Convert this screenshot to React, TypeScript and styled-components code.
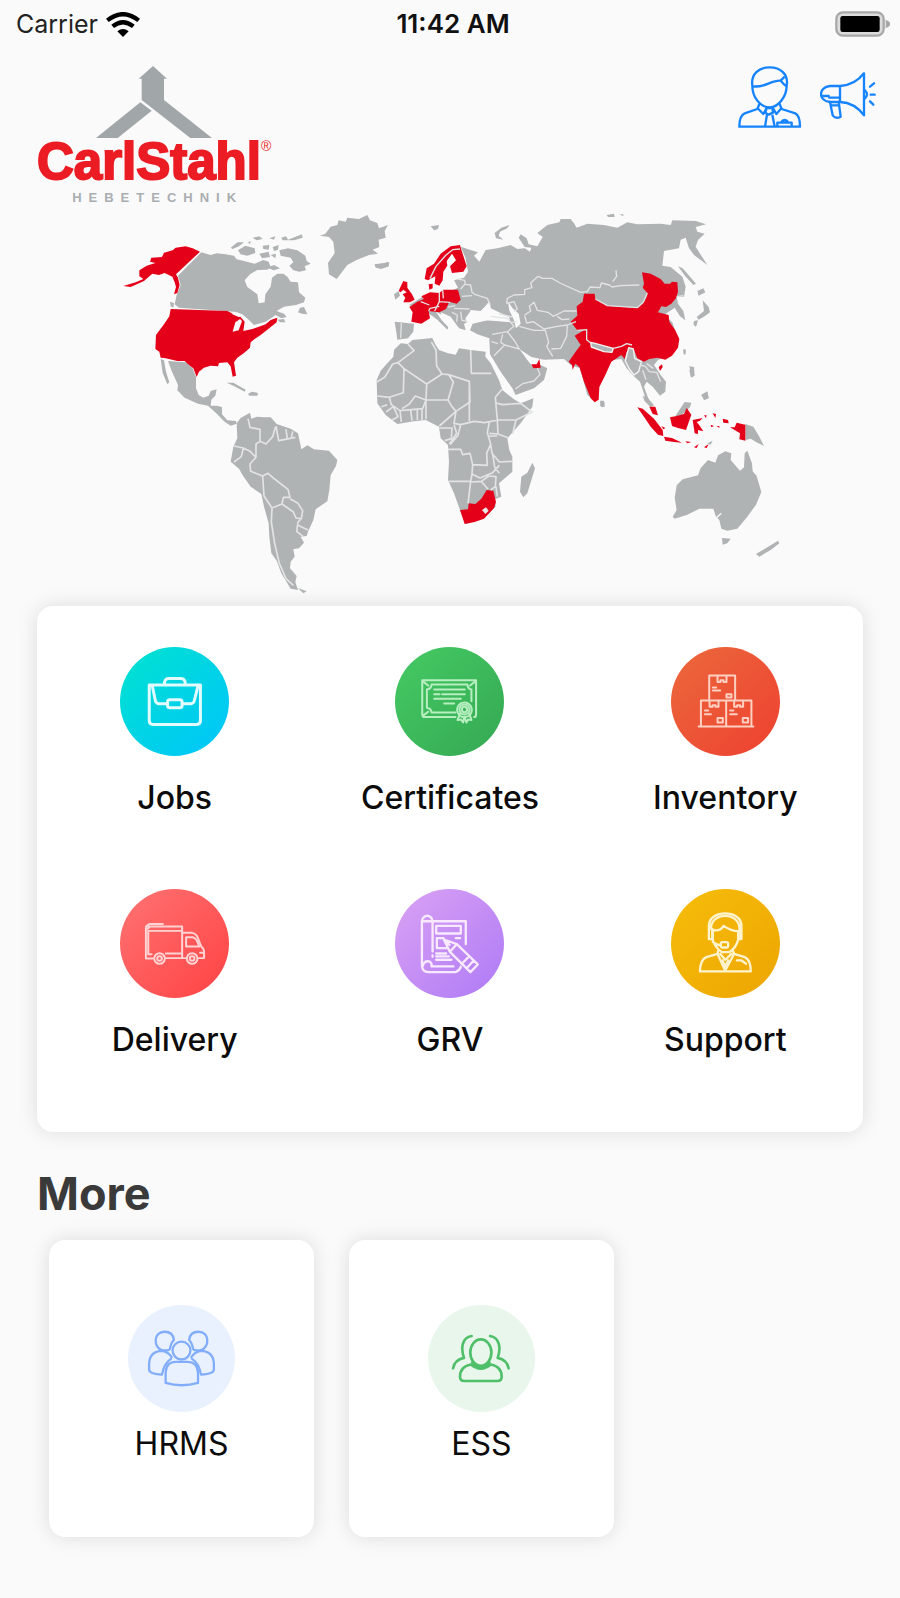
import React from "react";
import styled, { createGlobalStyle } from "styled-components";

const GlobalStyle = createGlobalStyle`
  *, *::before, *::after { box-sizing: border-box; }
  body {
    margin: 0;
    background: #fafafa;
    color: #111;
    font-family: Inter, "Liberation Sans", sans-serif;
  }
`;

const Screen = styled.div`
  display: flex;
  flex-direction: column;
  min-height: 100vh;
  background: #fafafa;
`;

const StatusBar = styled.div`
  display: grid;
  grid-template-columns: 1fr auto 1fr;
  align-items: center;
  height: 48px;
  padding: 0 10px 0 16px;
  font-size: 26px;
  line-height: 32px;
`;

const Carrier = styled.div`
  display: flex;
  align-items: center;
  gap: 8px;
  color: #222;
  font-size: 25px;
`;

const Time = styled.div`
  font-weight: 600;
  color: #111;
`;

const BatterySlot = styled.div`
  display: flex;
  justify-content: flex-end;
`;

const Header = styled.header`
  display: flex;
  justify-content: space-between;
  align-items: flex-start;
  padding: 18px 24px 0 37px;
`;

const Brand = styled.div`
  display: flex;
  flex-direction: column;
  align-items: center;
  font-family: "Liberation Sans", Arial, sans-serif;
`;

const WordmarkRow = styled.div`
  display: flex;
  align-items: flex-start;
  color: #ec1c24;
`;

const Wordmark = styled.span`
  font-size: 51px;
  font-weight: 700;
  line-height: 48px;
  -webkit-text-stroke: 2px #ec1c24;
`;

const Registered = styled.span`
  font-size: 14px;
  line-height: 16px;
`;

const Tagline = styled.span`
  padding: 4px 0 0 7px;
  font-size: 13px;
  font-weight: 700;
  line-height: 16px;
  letter-spacing: 7px;
  color: #a9aeb1;
`;

const HeaderActions = styled.div`
  display: flex;
  align-items: center;
  gap: 18px;
`;

const IconButton = styled.button`
  display: flex;
  padding: 0;
  border: 0;
  background: none;
  cursor: pointer;
`;

const MapSection = styled.section`
  display: flex;
  justify-content: center;
  padding-bottom: 11px;

  svg {
    display: block;
    width: 75%;
    height: auto;
  }
`;

const MenuCard = styled.nav`
  display: grid;
  grid-template-columns: repeat(3, 1fr);
  row-gap: 71px;
  margin: 0 37px;
  padding: 41px 0 72px;
  border-radius: 16px;
  background: #fff;
  box-shadow: 0 0 20px rgba(0, 0, 0, 0.12);
`;

const MenuItem = styled.button`
  display: flex;
  flex-direction: column;
  align-items: center;
  gap: 22px;
  padding: 0;
  border: 0;
  background: none;
  color: #0c0c0c;
  font: 500 32px/40px Inter, "Liberation Sans", sans-serif;
  cursor: pointer;
`;

const Badge = styled.span<{ $from: string; $to: string }>`
  display: flex;
  width: 109px;
  height: 109px;
  border-radius: 50%;
  background: linear-gradient(135deg, ${(p) => p.$from}, ${(p) => p.$to});
`;

const MoreTitle = styled.h2`
  margin: 35px 37px 19px;
  color: #3a3a3a;
  font-size: 45px;
  font-weight: 700;
  line-height: 54px;
`;

const MoreList = styled.nav`
  display: flex;
  gap: 35px;
  padding: 0 49px 60px;
`;

const MoreCard = styled.button`
  display: flex;
  flex-direction: column;
  align-items: center;
  flex: 0 1 265px;
  gap: 12px;
  padding: 65px 0 73px;
  border: 0;
  border-radius: 16px;
  background: #fff;
  box-shadow: 0 0 20px rgba(0, 0, 0, 0.12);
  color: #0c0c0c;
  font: 400 32px/40px Inter, "Liberation Sans", sans-serif;
  cursor: pointer;
`;

const SoftBadge = styled.span<{ $tint: string }>`
  display: flex;
  width: 107px;
  height: 107px;
  border-radius: 50%;
  background: ${(p) => p.$tint};
`;

const Glyph = styled.svg`
  display: block;
  width: 100%;
  height: 100%;
  fill: none;
  stroke-linecap: round;
  stroke-linejoin: round;
`;

const LAND = "#b0b3b4";
const RED = "#e50019";
const SEA = "#fafafa";

const Wifi = () => (
  <svg width="34" height="25" viewBox="0 0 102 75" fill="none" stroke="#000" strokeWidth="13" aria-label="Wi-Fi">
    <path d="M4 25Q51 -12 98 25" />
    <path d="M20 43Q51 18 82 43" />
    <path d="M34 58Q51 44 68 58L51 75Z" fill="#000" stroke="none" />
  </svg>
);

const Battery = () => (
  <svg width="55" height="26" viewBox="0 0 165 78" aria-label="Battery full">
    <rect x="4" y="4" width="142" height="70" rx="20" fill="#dcdcdc" stroke="#a8a8a8" strokeWidth="7" />
    <rect x="16" y="15" width="118" height="48" rx="7" fill="#000" />
    <path d="M152 26Q166 32 166 39T152 52Z" fill="#a8a8a8" />
  </svg>
);

const LogoMark = () => (
  <svg width="116" height="72" viewBox="287 198 348 216" fill="#a1a6a9" aria-hidden="true">
    <path d="M458 198L500 236H491V300L635 414H570L424 300V236H415Z" />
    <path d="M420 307L454 332L352 414H287Z" />
  </svg>
);

const ProfileIcon = () => (
  <svg width="64" height="64" viewBox="112 196 192 192" fill="none" stroke="#1683ff" strokeWidth="7" strokeLinejoin="round">
    <path d="M155 255C150 220 175 200 207 200S264 220 258 255C258 285 235 320 207 320S155 290 155 255Z" />
    <path d="M157 257C195 262 210 238 240 240Q247 250 258 257M240 240L252 228" />
    <path d="M177 308L170 325L132 338Q116 345 116 378H298Q298 345 284 338L243 325L236 308" />
    <path d="M170 322L188 340L198 322H217L227 340L243 322M198 322L194 336L204 342L217 336L215 322M199 342L193 378M215 342L222 378" />
    <path d="M230 378V366H240Q252 350 264 366H273V378M240 366H264" />
  </svg>
);

const MegaphoneIcon = () => (
  <svg width="56" height="56" viewBox="358 212 168 168" fill="none" stroke="#1683ff" strokeWidth="7" strokeLinejoin="round" strokeLinecap="round">
    <path d="M418 260H388C352 264 352 305 388 308H418ZM418 260Q462 258 490 222V348Q462 310 418 308" />
    <path d="M386 295H414M364 290H384M388 308L396 348Q405 360 420 352L414 308M394 318H414" />
    <path d="M492 272Q506 285 492 298M508 262L520 252M510 286H522M508 306L518 316" />
  </svg>
);

const JobsIcon = () => (
  <Glyph viewBox="61 52 328 328" stroke="#e2fbff" strokeWidth="9">
    <path d="M149 166H303V274Q303 285 292 285H160Q149 285 149 274Z" />
    <path d="M195 164V157Q198 147 208 147H243Q254 147 257 157V164" />
    <path d="M158 168L168 216Q172 223 180 223H204M296 168L284 216Q280 223 272 223H248" />
    <rect x="204" y="211" width="44" height="24" rx="7" />
  </Glyph>
);

const CertificateIcon = () => (
  <Glyph viewBox="888 52 328 328" stroke="#b7efc1" strokeWidth="6">
    <path d="M1070 263H978Q970 263 970 255V152H1132V255Q1132 263 1126 263" />
    <path d="M998 165H1106Q1107 178 1118 180V215M1070 249H998Q997 237 984 235V180Q997 178 998 165" />
    <path d="M974 157L988 168M1128 157L1114 168M974 257L988 247" />
    <path d="M1006 180H1098M1006 194H1022M1030 194H1098M1006 208H1086M1036 222H1066" />
    <path d="M1084 252L1076 272L1087 270L1093 279L1097 262L1103 279L1108 270L1118 272L1112 252" />
    <circle cx="1097" cy="241" r="22" strokeDasharray="9 3" />
    <circle cx="1097" cy="240" r="15" />
    <circle cx="1097" cy="240" r="8" />
  </Glyph>
);

const InventoryIcon = () => (
  <Glyph viewBox="64 52 328 328" stroke="#ffd0c2" strokeWidth="6">
    <path d="M147 291H312M179 213V138H257V213M154 290V213H306V290M230 213V290" />
    <path d="M204 139V157H213V152H222V157H231V139M180 214V232H189V227H198V232H207V214M254 214V232H263V227H272V232H281V214" />
    <path d="M190 174H200M190 183H212M166 243H176M166 254H184M242 243H252M242 254H262" />
    <rect x="231" y="194" width="15" height="10" />
    <rect x="204" y="266" width="16" height="13" />
    <rect x="280" y="266" width="16" height="13" />
  </Glyph>
);

const DeliveryIcon = () => (
  <Glyph viewBox="61 58 328 328" stroke="#ffd3d3" strokeWidth="6">
    <path d="M160 267H139V171L150 163H190M146 171H248V266H199M139 181L150 172M146 184H244M146 184V252" />
    <path d="M248 190H278Q291 192 296 207L306 232Q314 236 314 250V266H298M258 266H248M199 252H248" />
    <path d="M260 203H280Q289 205 292 213L300 231H260ZM302 250H312M146 254H156" />
    <circle cx="180" cy="267" r="16" />
    <circle cx="180" cy="267" r="7" />
    <circle cx="278" cy="267" r="16" />
    <circle cx="278" cy="267" r="7" />
  </Glyph>
);

const GrvIcon = () => (
  <Glyph viewBox="888 58 328 328" stroke="#f8e9ff" strokeWidth="7">
    <path d="M1001 246V155Q999 140 985 138Q971 140 969 155V288Q970 308 988 308H1070Q1082 304 1086 292" />
    <path d="M1001 155H1101V224M969 155H1001M971 290Q977 272 990 276Q1000 280 998 291H1064M1001 258V262" />
    <rect x="1012" y="169" width="74" height="23" />
    <path d="M1046 236H1014V206H1034M1071 206H1084M1012 252H1042M1012 261H1050M1012 271H1058" />
    <path d="M1035 210L1074 224L1137 285L1115 308L1053 247ZM1053 247L1074 224M1110 262L1088 284M1124 274L1103 297M1035 210L1052 226" />
  </Glyph>
);

const SupportIcon = () => (
  <Glyph viewBox="64 777 328 328" stroke="#fff3cd" strokeWidth="7">
    <path d="M184 897C184 845 270 845 270 897V928H276V888C276 838 178 838 178 888V928H188V897" />
    <path d="M190 900Q212 906 222 888Q246 904 266 904M190 905V932Q196 952 217 967H240Q260 953 266 930V904M190 936Q200 946 212 946" />
    <rect x="214" y="937" width="22" height="16" rx="5" />
    <path d="M206 963L204 972L170 982Q152 990 151 1025H304Q304 990 286 982L254 972L250 963" />
    <path d="M204 972L227 1023L254 972M212 972L227 990L246 972M219 992L227 1010L236 992M262 992H276L290 1002" />
  </Glyph>
);

const HrmsIcon = () => (
  <Glyph viewBox="0 0 324 324" stroke="#82adfa" strokeWidth="7">
    <path d="M99 135C78 126 76 81 111 81Q136 81 139 106Q130 114 127 133M99 135Q112 140 124 136" />
    <path d="M225 135C246 126 248 81 213 81Q188 81 185 106Q194 114 197 133M225 135Q212 140 200 136" />
    <path d="M103 211Q64 208 64 196V177Q66 140 104 139Q122 142 132 158M103 211Q108 178 130 163" />
    <path d="M221 211Q260 208 260 196V177Q258 140 220 139Q202 142 192 158M221 211Q216 178 194 163" />
    <circle cx="162" cy="138" r="27" />
    <path d="M114 236V204Q116 172 145 172H179Q210 172 212 204V236Q162 250 114 236Z" />
  </Glyph>
);

const EssIcon = () => (
  <Glyph viewBox="0 0 324 324" stroke="#4fbf6a" strokeWidth="8">
    <ellipse cx="160" cy="144" rx="32" ry="40" />
    <path d="M132 94C104 98 98 130 109 160Q80 166 76 192M188 94C216 98 222 130 211 160Q240 166 244 192" />
    <path d="M130 180Q97 186 97 217Q97 230 110 230H210Q223 230 223 217Q223 186 190 180Q160 205 130 180Z" />
    <path d="M134 174Q160 200 186 174" />
  </Glyph>
);

const WorldMap = () => (
  <svg viewBox="337 618 2025 1167" role="img" aria-label="World map with active countries in red" strokeLinejoin="round">
    {/* North America and Greenland */}
    <g transform="translate(330 615)" fill={LAND}>
      <path d="M272 142L300 150L318 145L345 148L370 152L378 163L400 168L432 176L458 165L474 170L480 186L470 194L440 195L418 208L402 226L410 246L440 268L444 295L462 292L464 268L480 245L484 218L500 206L518 206L530 215L540 230L562 232L565 262L584 278L580 292L556 300L520 305L498 318L520 326L528 336L512 340L495 330L465 350L430 360L415 345L395 328L370 320L205 308L192 298L198 270L210 240L202 212Z" />
      <path d="M360 128L380 112L400 112L385 124L366 132ZM382 136L404 122L432 130L434 144L410 152L390 148ZM426 98L446 94L456 102L438 106ZM476 100L494 94L490 104ZM512 98L526 94L532 104L574 88L576 98L550 106L516 106ZM456 122L476 120L474 134L458 132ZM486 126L504 120L502 134L490 138ZM446 146L474 140L478 156L454 160ZM480 150L496 146L494 160ZM506 136L532 130L560 136L584 152L588 168L600 176L582 184L586 196L566 200L548 196L536 182L548 172L540 158L510 152ZM468 188L490 180L508 190L490 196ZM562 322L568 308L580 306L590 328L574 326ZM500 344L520 342L524 352L508 352ZM178 290L190 294L188 308L180 304ZM412 112L420 108L418 118Z" />
      <path d="M628 92L644 86L660 65L680 60L684 46L705 50L710 38L745 42L770 30L778 46L800 54L805 70L832 60L822 78L825 98L804 104L806 126L786 134L802 146L775 150L738 165L710 180L690 206L678 222L655 208L652 174L672 144L668 110L655 96Z" />
      <path d="M792 178L806 182L832 170L834 184L812 192L796 188Z" />
      <path d="M172 468L225 472L245 488L256 515L256 550L264 570L278 578L294 572L300 558L318 553L314 572L302 584L300 602L318 602L334 606L334 628L350 646L376 648L378 656L360 662L342 650L316 624L292 602L262 596L222 578L200 556L202 540L184 500Z" />
      <path d="M150 462L160 466L166 500L176 532L170 538L156 504ZM348 533L368 533L405 554L402 560L368 542ZM412 566L424 560L442 564L440 572L416 572Z" />
      <path fill={RED} d="M268 140L246 130L225 124L195 128L186 136L160 143L154 156L122 158L118 170L134 174L108 182L86 196L86 214L98 222L75 232L38 243L60 246L100 228L125 206L145 210L162 204L185 215L192 232L196 246L190 268L200 264L207 240L202 218L196 208Z" />
      <path fill={RED} d="M180 312L350 318L370 328L388 334L402 350L398 378L425 372L465 358L480 345L500 338L498 352L470 374L450 390L432 402L420 412L418 428L400 444L380 458L370 472L376 512L366 515L360 484L350 472L325 474L322 484L300 482L280 488L265 500L258 516L248 490L232 478L222 468L200 468L165 460L150 458L146 440L134 432L136 390L160 358L176 334Z" />
      <path fill={SEA} d="M366 380L374 352L388 342L394 348L384 376ZM362 326L380 322L400 334L384 336Z" />
    </g>

    {/* South America */}
    <g transform="translate(630 1170)">
      <path fill={LAND} d="M78 100L90 84L118 68L122 86L140 80L160 82L180 82L198 102L240 116L262 130L268 158L272 178L290 166L310 178L355 182L380 210L376 228L360 255L356 300L350 334L315 358L308 390L292 425L288 438L270 440L280 458L265 475L248 478L252 500L240 515L238 535L258 558L254 576L262 600L240 596L212 550L198 512L182 490L176 440L174 400L160 350L152 312L120 290L96 256L85 236L60 215L68 170L80 145ZM262 594L288 604L278 610Z" />
      <path fill="none" stroke="#e2e4e4" strokeWidth="5" d="M112 86L118 112L148 118L148 154L136 162V202L118 184L98 174L70 168M148 154L166 162L186 140L194 112M196 108L204 152L254 142M226 118L230 148M246 124L242 144M136 202L118 222L120 244L156 258L172 250L188 264L232 298L238 322L218 322L214 342L248 366L256 384L272 386L276 362L262 340L238 326M98 174L92 200L70 216M156 258L160 318L184 354L214 342M184 354L182 396L192 460L206 520L226 566L248 586M272 386L262 396L258 424L278 440M262 406L292 420" />
    </g>

    {/* Europe and Asia */}
    <g transform="translate(1110 615)">
      <path fill={LAND} d="M270 125L300 135L322 142L310 152L326 170L345 135L380 130L420 120L440 132L462 130L478 140L482 128L462 126L444 98L450 88L468 100L474 118L500 124L516 96L500 84L530 60L566 52L570 42L600 42L610 55L618 68L650 56L700 60L740 68L770 52L800 58L870 56L900 60L905 46L975 48L1006 58L975 66L980 80L1002 86L982 105L975 125L992 152L1010 180L970 150L955 130L945 98L930 104L925 130L880 138L875 182L900 186L935 215L945 245L940 275L918 275L922 296L938 318L944 346L928 334L912 308L880 330L905 352L920 400L910 440L862 465L850 480L870 510L886 530L884 560L868 572L846 545L828 530L820 545L838 594L828 590L808 530L788 512L768 490L752 462L722 466L704 504L684 546L675 590L650 570L628 490L600 480L580 462L520 464L482 456L446 432L470 465L490 490L510 480L530 490L520 525L490 550L435 570L425 550L390 500L358 448L356 400L320 388L298 376L306 356L350 346L420 352L415 336L360 310L358 290L330 318L300 315L292 338L295 350L280 356L285 376L265 370L240 335L210 322L215 340L236 360L230 374L200 344L170 322L115 300L165 270L240 258L262 248L250 226L280 218L292 200L285 160Z" />
      <path fill={LAND} d="M72 350L130 356L128 380L112 400L80 404L76 376ZM180 64L205 60L202 72L190 76ZM372 84L392 68L416 60L410 70L388 80L384 92L398 104L376 100ZM12 178L56 172L54 184L30 190L14 186ZM70 268L84 258L88 272L74 284ZM708 30L730 26L732 36L712 36ZM746 28L758 28L758 34ZM922 184L936 190L976 236L968 240L944 214ZM980 258L998 250L1004 262L984 272ZM996 286L1014 306L1018 322L1004 332L984 344L978 336L1000 318ZM970 348L982 346L976 366L968 358ZM938 432L946 434L944 450L938 446ZM956 484L970 486L972 512L962 518ZM992 570L1010 562L1014 580L1000 586ZM690 588L702 594L700 606L688 602Z" />
      <g fill={SEA}>
        <path d="M300 318L330 320L355 290L358 312L390 334L410 348L350 346L310 352L290 362L284 340ZM412 290L426 310L444 326L450 356L436 370L430 346L416 316ZM196 320L214 330L264 368L262 384L240 374L212 344Z" />
        <path d="M232 176L244 160L236 200L284 208L280 216L248 218L252 240L200 248L212 238L220 210Z" />
      </g>
      <g fill={RED}>
        <path d="M162 222L168 190L190 176L210 146L240 124L268 120L272 134L288 184L278 200L244 204L238 184L256 166L244 146L228 168L230 182L218 200L216 226L206 242L192 236L194 214L178 222L172 226ZM174 238L186 236L186 250L176 254Z" />
        <path d="M92 240L98 228L110 232L110 248L124 268L132 284L118 292L98 292L104 278L96 268L108 262L98 254L90 262L84 258Z" />
        <path d="M116 306L140 290L160 282L152 274L178 262L206 264L218 254L262 254L270 284L258 296L236 290L226 312L206 322L174 318L178 340L152 356L122 350L126 322Z" />
        <path d="M482 478L498 478L506 462L510 488L488 490Z" />
        <path d="M600 350L620 332L618 304L636 290L640 266L672 266L674 282L710 302L760 306L800 308L814 296L826 280L830 264L816 248L820 236L814 202L840 206L870 222L882 236L898 236L904 230L920 232L922 260L916 280L902 296L886 306L872 304L862 322L894 330L896 350L914 376L926 402L922 428L904 452L884 464L860 458L836 462L820 470L800 460L790 436L768 440L762 462L752 450L722 470L704 510L686 546L684 584L672 592L660 580L640 530L626 486L614 476L606 494L604 480L594 470L618 436L630 420L612 392L642 374L620 376Z" />
        <path d="M864 486L874 478L876 486L868 498Z" />
      </g>
      <path fill={LAND} stroke="#f4f4f4" strokeWidth="4" d="M660 412L676 416L728 430L724 442L700 440L662 426ZM774 428L788 432L792 460L812 470L804 500L790 510L776 492L764 468Z" />
      <g fill="none" stroke="#e2e4e4" strokeWidth="4">
        <path d="M178 220L196 184L226 150L246 134L268 132M206 262V290L192 318M206 290L238 292M216 254L218 280M174 318L178 310L206 304M150 290L176 300" />
        <path d="M262 222L282 226L284 238L300 240L304 262L312 268L350 280L358 300M270 252L284 236M274 274L304 272M250 310L296 312M244 322L260 330L258 350M270 320L274 346L292 350M232 306L254 302M92 354L90 400" />
        <path d="M408 296L410 280L430 270L462 268L462 254L484 248L480 234L502 214L516 220L544 220L568 234L630 262L650 260L658 246L688 248L692 234L716 240L724 246L748 242L806 240M408 296L430 290L440 312L430 320M736 196L738 214L726 230" />
        <path d="M462 330L480 318L476 304L490 292L500 316L532 322L548 334L580 318L618 318M462 332L468 354L488 350L520 372L560 364L590 360L616 350M446 364L490 376L524 376L534 412L528 424L546 454M560 334L574 344L596 342M590 362L588 394L570 430L542 432M360 334L410 340L430 364L410 380L364 388M384 326L424 336M420 352L440 350M410 380L432 408L446 432L402 420L390 412L396 388M402 420L370 452M362 410L382 416" />
        <path d="M674 282L710 302L800 308L818 292L830 264M620 376L648 374L648 404L660 414M728 430L752 424L768 416L784 420M918 275L938 272M500 490L508 508L490 528L456 536L434 552M808 480L824 484L836 500L858 502L870 530M828 476L848 490M816 496L826 524" />
      </g>
    </g>

    {/* Africa */}
    <g transform="translate(1080 930)">
      <path fill={LAND} d="M120 100L142 102L155 90L215 84L225 105L235 120L262 130L285 134L295 115L330 120L375 125L374 140L390 160L415 210L425 240L460 268L480 280L518 265L515 290L480 340L440 385L446 420L455 440L455 485L415 520L422 560L402 568L405 590L370 625L315 642L298 600L280 550L262 510L265 455L262 405L240 385L235 350L195 330L160 334L110 342L75 315L50 280L48 210L60 182L80 160L98 140L100 120ZM515 458L523 475L500 550L488 562L478 545L482 500L500 488Z" />
      <path fill={RED} d="M298 600L322 598L324 580L344 582L362 566L378 540L398 542L406 576L400 594L370 626L342 636L312 642Z" />
      <path fill="#e8e9e9" d="M364 600L376 592L384 602L374 612Z" />
      <g fill="none" stroke="#e2e4e4" strokeWidth="5">
        <path d="M142 102L160 122L112 158L130 176L128 248L86 262L50 258M112 158L96 162L72 202L48 216M130 176L198 222L244 192L228 168L226 120L212 96M244 192L264 194L326 214V334M330 120L332 190L392 190M198 222L196 270L164 258L146 282L124 296M86 262L92 284L118 302L186 296L196 270L262 270L278 216L264 194M262 270L274 290L286 304L328 276L326 214M424 238L404 262L410 330M404 278L424 284L480 280L514 306L466 330L412 330L372 338L340 334L300 344L280 340L286 304L236 348M196 272V328M118 302L122 336M150 300L154 332M170 300V330M184 298V330M62 290L80 284M76 306L98 290L112 320L94 330" />
        <path d="M236 354H274L272 386L252 392M300 344L292 376L268 404M280 344L288 370L266 402M262 418L300 418L306 434L328 430L336 464L380 466L378 430L390 402L380 368L386 336M410 330L412 372L386 370M412 372L444 384M466 330L456 372M390 402L394 430L416 456L454 454M396 432L402 472L416 490M336 464L334 492L358 504L396 488L416 466M334 492L330 514H264M330 514L322 580M330 516L362 514L382 538M362 514L384 498L406 500L404 530L390 540M406 530L410 560M382 378H410" />
      </g>
    </g>

    {/* South-east Asia and Australia */}
    <g transform="translate(1710 1110)">
      <path fill={LAND} d="M318 346L336 328L382 316L390 294L412 270L434 278L442 256L464 244L482 250L480 270L508 302L520 292L522 250L530 242L544 280L546 304L558 318L572 366L556 404L530 440L500 476L470 482L452 476L446 450L436 440L428 416L386 416L350 434L312 446L306 440L318 420L312 384ZM454 504L480 506L470 520L456 524ZM556 552L600 526L622 512L626 520L600 540L566 560ZM524 162L548 170L566 200L580 228L556 216L540 206L524 210ZM314 138L342 96L362 98L358 112L330 138ZM216 78L230 82L250 106L240 112L222 94ZM88 92L100 92L102 110L92 112ZM392 74L410 64L414 84L402 88ZM356 0H368L366 20L360 20ZM410 220L426 212L420 224Z" />
      <path fill={RED} d="M200 112L216 116L250 146L276 180L278 198L262 194L240 170L224 146ZM236 110L254 110L262 136L246 132ZM280 200L304 204L334 218L310 216L284 212ZM298 142L318 138L340 132L348 114L362 134L346 180L322 174L304 168ZM366 150L396 144L388 152L378 156L386 166L398 184L382 180L382 192L372 190ZM426 130L436 132L434 144ZM456 146L472 150L474 160L458 158ZM478 172L492 172L498 158L524 164V212L506 208L508 190ZM370 232L384 222L378 234ZM400 232L414 222L408 234ZM400 136L408 136L406 144ZM420 164L430 168L422 172ZM438 168L446 168L446 174ZM272 168L284 174L278 178ZM344 214L362 216L350 220Z" />
      <path stroke={SEA} strokeWidth="4" fill="none" d="M434 446L452 430" />
    </g>
  </svg>
);

const menu = [
  { label: "Jobs", from: "#00e3cf", to: "#00c4fb", Icon: JobsIcon },
  { label: "Certificates", from: "#45ca63", to: "#35a853", Icon: CertificateIcon },
  { label: "Inventory", from: "#eb693c", to: "#ee4030", Icon: InventoryIcon },
  { label: "Delivery", from: "#ff7373", to: "#ff4243", Icon: DeliveryIcon },
  { label: "GRV", from: "#daa2f3", to: "#ae7af6", Icon: GrvIcon },
  { label: "Support", from: "#f6bd0b", to: "#eda500", Icon: SupportIcon },
];

const more = [
  { label: "HRMS", tint: "#eaf1fe", Icon: HrmsIcon },
  { label: "ESS", tint: "#e9f6ec", Icon: EssIcon },
];

export default function App() {
  return (
    <Screen>
      <GlobalStyle />
      <StatusBar>
        <Carrier>
          Carrier
          <Wifi />
        </Carrier>
        <Time>11:42 AM</Time>
        <BatterySlot>
          <Battery />
        </BatterySlot>
      </StatusBar>
      <Header>
        <Brand>
          <LogoMark />
          <WordmarkRow>
            <Wordmark>CarlStahl</Wordmark>
            <Registered>®</Registered>
          </WordmarkRow>
          <Tagline>HEBETECHNIK</Tagline>
        </Brand>
        <HeaderActions>
          <IconButton type="button" aria-label="Profile">
            <ProfileIcon />
          </IconButton>
          <IconButton type="button" aria-label="Announcements">
            <MegaphoneIcon />
          </IconButton>
        </HeaderActions>
      </Header>
      <main>
        <MapSection>
          <WorldMap />
        </MapSection>
        <MenuCard aria-label="Main menu">
          {menu.map(({ label, from, to, Icon }) => (
            <MenuItem key={label} type="button">
              <Badge $from={from} $to={to}>
                <Icon />
              </Badge>
              {label}
            </MenuItem>
          ))}
        </MenuCard>
        <MoreTitle>More</MoreTitle>
        <MoreList aria-label="More">
          {more.map(({ label, tint, Icon }) => (
            <MoreCard key={label} type="button">
              <SoftBadge $tint={tint}>
                <Icon />
              </SoftBadge>
              {label}
            </MoreCard>
          ))}
        </MoreList>
      </main>
    </Screen>
  );
}
